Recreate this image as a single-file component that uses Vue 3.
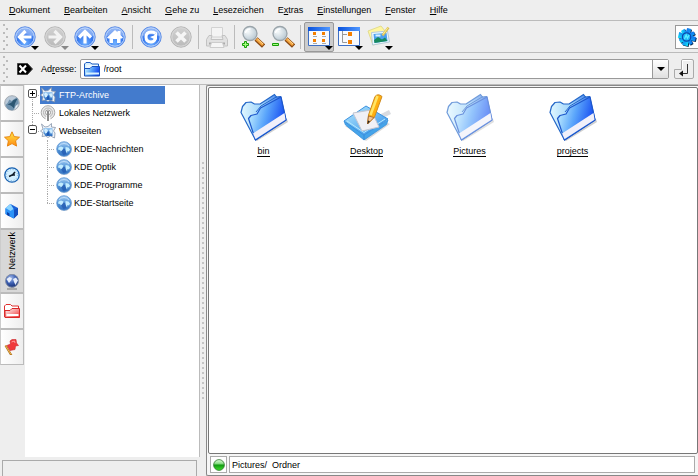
<script setup>
import { ref } from 'vue'

const menus = [
  ['', 'D', 'okument'],
  ['', 'B', 'earbeiten'],
  ['', 'A', 'nsicht'],
  ['', 'G', 'ehe zu'],
  ['', 'L', 'esezeichen'],
  ['E', 'x', 'tras'],
  ['', 'E', 'instellungen'],
  ['', 'F', 'enster'],
  ['', 'H', 'ilfe'],
]

const tools = [
  [
    { icon: 'back', label: 'Zurück', drop: true },
    { icon: 'forward', label: 'Vorwärts', drop: true, off: true },
    { icon: 'up', label: 'Nach oben', drop: true },
    { icon: 'home', label: 'Startseite' },
  ],
  [
    { icon: 'reload', label: 'Neu laden' },
    { icon: 'stop', label: 'Abbrechen', off: true },
  ],
  [{ icon: 'print', label: 'Drucken', off: true }],
  [
    { icon: 'zoomin', label: 'Vergrößern' },
    { icon: 'zoomout', label: 'Verkleinern' },
  ],
  [
    { icon: 'iconview', label: 'Symbolansicht', drop: true, on: true },
    { icon: 'treeview', label: 'Baumansicht', drop: true },
    { icon: 'preview', label: 'Vorschau', drop: true },
  ],
]

const tabs = [
  { icon: 'amarok', label: 'Medien' },
  { icon: 'star', label: 'Lesezeichen' },
  { icon: 'clock', label: 'Verlauf' },
  { icon: 'cube', label: 'Persönlicher Ordner' },
  { icon: 'network', label: 'Netzwerk', on: true },
  { icon: 'redfolder', label: 'Wurzelordner' },
  { icon: 'flag', label: 'Dienste' },
]

const tree = [
  { text: 'FTP-Archive', icon: 'site', box: '+', on: true },
  { text: 'Lokales Netzwerk', icon: 'lan' },
  { text: 'Webseiten', icon: 'site', box: '-', last: true },
  { text: 'KDE-Nachrichten', icon: 'globe', sub: true },
  { text: 'KDE Optik', icon: 'globe', sub: true },
  { text: 'KDE-Programme', icon: 'globe', sub: true },
  { text: 'KDE-Startseite', icon: 'globe', sub: true, last: true },
]

const files = [
  { name: 'bin', icon: 'folder' },
  { name: 'Desktop', icon: 'desktop' },
  { name: 'Pictures', icon: 'folder', hover: true },
  { name: 'projects', icon: 'folder' },
]

const address = ref('/root')
</script>

<template>
  <div class="window">
    <svg class="defs" width="0" height="0" aria-hidden="true">
      <defs>
        <radialGradient id="gBlue" cx=".5" cy=".8" r=".8">
          <stop offset="0" stop-color="#6fb0ff" /><stop offset=".5" stop-color="#3577ee" /><stop offset="1" stop-color="#6f9ff2" />
        </radialGradient>
        <linearGradient id="gGrey" x2="0" y2="1">
          <stop offset="0" stop-color="#d2d2d2" /><stop offset="1" stop-color="#b9b9b9" />
        </linearGradient>
        <linearGradient id="gFront" x1="0" y1=".3" x2="1" y2=".6">
          <stop offset="0" stop-color="#c4f0ff" /><stop offset=".45" stop-color="#5ba6fb" /><stop offset="1" stop-color="#0b3df0" />
        </linearGradient>
        <linearGradient id="gBack" x2="1" y2="0">
          <stop offset="0" stop-color="#e2f8ff" /><stop offset=".45" stop-color="#9fd4fb" /><stop offset="1" stop-color="#1f5fe6" />
        </linearGradient>
        <linearGradient id="gGlobe" x2="0" y2="1">
          <stop offset="0" stop-color="#a3cdf2" /><stop offset=".45" stop-color="#5c9bdb" /><stop offset="1" stop-color="#2e6fc0" />
        </linearGradient>
        <radialGradient id="gDark" cx=".4" cy=".3" r=".75">
          <stop offset="0" stop-color="#aac0ee" /><stop offset=".5" stop-color="#3f62b4" /><stop offset="1" stop-color="#132a70" />
        </radialGradient>
        <linearGradient id="gTitle" x2="1" y2="0">
          <stop offset="0" stop-color="#0a52dc" /><stop offset="1" stop-color="#4f97ff" />
        </linearGradient>
        <linearGradient id="gTray" x2="1" y2="1">
          <stop offset="0" stop-color="#b8ebff" /><stop offset="1" stop-color="#2b8be8" />
        </linearGradient>
        <radialGradient id="gLens" cx=".35" cy=".35" r=".7">
          <stop offset="0" stop-color="#f8fbfc" /><stop offset="1" stop-color="#b8c8d2" />
        </radialGradient>
        <linearGradient id="gLed" x2="0" y2="1">
          <stop offset="0" stop-color="#e3ffe0" /><stop offset=".4" stop-color="#7fd87a" /><stop offset=".5" stop-color="#119a10" /><stop offset="1" stop-color="#3fe02c" />
        </linearGradient>
        <linearGradient id="gRed" x2="1" y2="1">
          <stop offset="0" stop-color="#fff" /><stop offset="1" stop-color="#ef3030" />
        </linearGradient>
        <linearGradient id="gStar" x2="0" y2="1">
          <stop offset="0" stop-color="#ffe94a" /><stop offset="1" stop-color="#ff8a10" />
        </linearGradient>
        <linearGradient id="gGear" x2="1" y2="1">
          <stop offset="0" stop-color="#0d6ff0" /><stop offset=".5" stop-color="#1296f4" /><stop offset="1" stop-color="#12e4f8" />
        </linearGradient>
      </defs>

      <symbol id="disc" viewBox="0 0 24 24">
        <circle cx="12" cy="12" r="10.200" fill="url(#gBlue)" stroke="#5c8ce6" />
        <circle cx="12" cy="12" r="9.200" fill="none" stroke="#c0d8fb" />
        <path d="M3.500 11a8.500 8 0 0 1 17 0q-8-3-17 0z" fill="#fff" opacity=".3" />
      </symbol>
      <symbol id="discgrey" viewBox="0 0 24 24">
        <circle cx="12" cy="12" r="10.200" fill="url(#gGrey)" stroke="#b5b5b5" />
        <circle cx="12" cy="12" r="9.200" fill="none" stroke="#d9d9d9" />
      </symbol>
      <symbol id="back" viewBox="0 0 24 24"><use href="#disc" /><path d="M18.500 12H7M12.500 6L6.500 12l6 6" fill="none" stroke="#fff" stroke-width="3.200" /></symbol>
      <symbol id="forward" viewBox="0 0 24 24"><use href="#discgrey" /><path d="M5.500 12H17M11.500 6l6 6-6 6" fill="none" stroke="#f2f2f2" stroke-width="3.200" /></symbol>
      <symbol id="up" viewBox="0 0 24 24"><use href="#disc" /><path d="M12 18.500V7M6 12.500l6-6 6 6" fill="none" stroke="#fff" stroke-width="3.200" /></symbol>
      <symbol id="home" viewBox="0 0 24 24"><use href="#disc" /><path d="M4 12.500L12 5l2.500 2.300V6h3v4l2.500 2.500-1 1h-1.500V18H14v-4h-4v4H6.500v-4.500H5z" fill="#fff" /></symbol>
      <symbol id="reload" viewBox="0 0 24 24"><use href="#disc" /><path d="M16.500 8.200Q14.500 7 12 7q-5 .2-5 5t5 5q3.500 0 4.300-3.500" fill="none" stroke="#fff" stroke-width="3" /><path d="M18 6.500v8h-2l-5-2.500 4-1.500z" fill="#fff" /></symbol>
      <symbol id="stop" viewBox="0 0 24 24"><use href="#discgrey" /><path d="M7.500 7.500l9 9M16.500 7.500l-9 9" stroke="#f5f5f5" stroke-width="3.600" /></symbol>
      <symbol id="print" viewBox="0 0 24 24">
        <path d="M6.500 2.500h11V12h-11z" fill="#f4f4f4" stroke="#d2d2d2" />
        <path d="M4 10.500h3l-1 4h12l-1-4h3l2.500 4V21h-21v-6.500z" fill="#e1e1e1" stroke="#c2c2c2" />
        <path d="M4 17.500h16v2H4z" fill="#aaa" /><path d="M6.500 17.500h11l1.500 5H5z" fill="#f5f5f5" stroke="#ccc" />
      </symbol>
      <symbol id="lens" viewBox="0 0 24 24">
        <path d="M15 14l7.500 7" stroke="#8b4a12" stroke-width="4.500" /><path d="M15.500 14l6.500 6" stroke="#f4a33c" stroke-width="2.800" /><path d="M16.500 14l5.500 5" stroke="#ffdc9a" />
        <circle cx="9" cy="8.500" r="7" fill="url(#gLens)" stroke="#9aa4aa" stroke-width="1.300" /><path d="M4.500 8a5 5 0 0 1 5-4" fill="none" stroke="#fff" stroke-width="1.500" />
      </symbol>
      <symbol id="zoomin" viewBox="0 0 24 24"><use href="#lens" /><path d="M3.500 16.500h2v2h2v2h-2v2h-2v-2h-2v-2h2z" fill="#a6ff80" stroke="#189c08" /></symbol>
      <symbol id="zoomout" viewBox="0 0 24 24"><use href="#lens" /><path d="M1.500 18.500h6v2h-6z" fill="#a6ff80" stroke="#189c08" /></symbol>
      <symbol id="pane" viewBox="0 0 24 24"><path d="M1.500 2.500h21v18h-21z" fill="#f7faff" stroke="#3d6fc4" /><path d="M1 2h22v4H1z" fill="url(#gTitle)" /></symbol>
      <symbol id="iconview" viewBox="0 0 24 24">
        <use href="#pane" /><path d="M6 7h3v3H6zM15 7h3v3h-3zM6 14h3v3H6zM15 14h3v3h-3z" fill="#f47f00" />
        <path d="M6 11.500h4M15 11.500h4M6 18.500h4M15 18.500h4" stroke="#aaa" />
      </symbol>
      <symbol id="treeview" viewBox="0 0 24 24">
        <use href="#pane" /><path d="M5.500 6v11.500H10M5.500 9.500H10" fill="none" stroke="#999" /><path d="M11 7h4v4h-4zM11 15h4v4h-4z" fill="#f47f00" />
      </symbol>
      <symbol id="preview" viewBox="0 0 24 24">
        <path d="M1 6l13-5 4 5 4 10L6 20z" fill="#fff6a0" stroke="#e2dc8e" /><path d="M4.500 7.500l16-1.500 2 11-17 3z" fill="#e9f7ff" stroke="#b5cbd9" />
        <path d="M6.500 9l13-1 1 8-13 2z" fill="#4ba0ee" /><path d="M7 15l4-3 4 2.500 3-2 2.500 3.500-13 2z" fill="#16895e" /><path d="M8.500 10.500h5" stroke="#d7f0ff" stroke-width="2" />
        <path d="M21.500 2.500l-6 8" stroke="#d9be58" stroke-width="2.500" /><path d="M21 2.500l-5 7" stroke="#fff18c" />
      </symbol>

      <symbol id="folder" viewBox="0 0 48 48">
        <path d="M14 46l33-20 1 3-31 19z" fill="#777" opacity=".35" />
        <path d="M1 19.500l1.500-6 3.500-4 5-.5 3.500 2h5.500l14.500-9.500 2 2.500 4-.500L46 27 15.500 47z" fill="url(#gBack)" stroke="#2467c8" stroke-width="1.200" stroke-linejoin="round" />
        <path d="M16 19l5-6 16-9.500" fill="none" stroke="#2467c8" />
        <path d="M8.500 25.500l2.500-3 6-1.500 3.500-6L41 4l5 23-30.500 20z" fill="url(#gFront)" stroke="#1d57cc" stroke-width="1.200" stroke-linejoin="round" />
        <path d="M13 40.500l31.500-20.500 1 6.700-30 19.300z" fill="#f1f0fa" />
      </symbol>
      <symbol id="desktop" viewBox="0 0 48 48">
        <path d="M34 23l12-6 2 4-14 7z" fill="#d9dbe0" /><path d="M2 33l21 15 24-17-5-2z" fill="#888" opacity=".3" />
        <path d="M1 28l20 14v5L2.500 32zM21 42l24-15-1.500 4.500L21 47z" fill="#45a4ea" stroke="#3a92dc" stroke-width=".8" />
        <path d="M1 28l22-15 22 13-24 16z" fill="url(#gTray)" stroke="#3a92e0" />
        <path d="M4 28l17 11.500L42 26" fill="none" stroke="#b5ebff" />
        <path d="M10 20l18-3 8 17-17 4z" fill="#f0f0f6" stroke="#c2c6d2" />
        <path d="M24.500 31l1-9L32 3.500q3-3.500 7 0L31.500 24z" fill="#ffaf10" stroke="#d08c20" /><path d="M27.500 22L34.500 3" stroke="#ffe566" stroke-width="2.500" />
        <path d="M24.500 31l1-8 5.500 1.500z" fill="#f4c896" stroke="#a05e28" stroke-width=".8" /><path d="M24.500 31l.5-3.500 2 .8z" fill="#222" />
      </symbol>
      <symbol id="smallfolder" viewBox="0 0 16 16">
        <path d="M.5 14.500V3L2 1.500h4L8 3h6.500v4" fill="#d5efff" stroke="#1c5cc0" /><path d="M2.500 4h11v4h-11z" fill="#edf8ff" />
        <path d="M.5 15V7.500H6L8 5.500h7.500V15z" fill="url(#gFront)" stroke="#1750bd" /><path d="M2 12.500h13" stroke="#d8f2ff" stroke-width="2" />
      </symbol>

      <symbol id="globe" viewBox="0 0 16 16">
        <circle cx="8.500" cy="8.500" r="7.400" fill="#999" opacity=".4" /><circle cx="8" cy="8" r="7.300" fill="url(#gGlobe)" stroke="#5e97d4" stroke-width=".8" />
        <path d="M2.500 6.500l2.500-1 2.500 1-.5 2.500-2 1.500-1-1.500-2-.5zM9.500 6l3 .5 1.500 2-1 2-1.500-.5-.5 2.500-1.500-3z" fill="#c2ecff" />
        <path d="M5 10.500l2.500-3L9 8l1.500 5-3 1z" fill="#215ab0" opacity=".75" /><path d="M3 5Q5 2.500 8 2.500t5 2.500" fill="none" stroke="#d5eaff" opacity=".7" />
      </symbol>
      <symbol id="site" viewBox="0 0 16 16">
        <path d="M1.500 1l3.500 3 3-.5L11.500.5v3.500l4 .5-2 3.500 1.500 2-.5 5-4-2-2.500 1.500-2.500-1.500-3.500.5 1-3.500L.5 8l2.500-2z" fill="#eef3f9" stroke="#8795ab" stroke-width=".8" />
        <path d="M3.500 5h9v8h-7l-2-3z" fill="url(#gGlobe)" /><path d="M4 7l1.500-1.500L8 7l-1 3-2 .5zM9 7l2.500-1 1 3-1.500 2z" fill="#d3efff" /><path d="M6.500 10.500l2-2.500 1 4-2 1z" fill="#1c58b4" />
      </symbol>
      <symbol id="lan" viewBox="0 0 16 16">
        <circle cx="8" cy="7.500" r="6.800" fill="#e9e9e9" stroke="#aaa" /><circle cx="8" cy="7.500" r="4.500" fill="none" stroke="#b5b5b5" />
        <circle cx="8" cy="7.500" r="2.500" fill="#fff" stroke="#999" /><path d="M5 16l2-7h2l2 7z" fill="#fff" /><path d="M8 6v10" stroke="#666" stroke-width="1.500" />
      </symbol>

      <symbol id="amarok" viewBox="0 0 16 16">
        <circle cx="8" cy="8" r="7.300" fill="#b9c9d8" stroke="#a6acb3" /><path d="M1.500 10q2.500-2 4-5.500l2 1.500L12.500 2.500q2.500 2.500 2 6.500l-3 2-2 4q-5 1-7-3z" fill="#7193ae" />
        <path d="M3.500 9.500l4-2 2-2.500 4-1.500-2.500 5-1 5q-2.500-3.500-6.500-4z" fill="#2c5672" /><path d="M12 11l2-2-1 3-2 2z" fill="#eef3f8" />
      </symbol>
      <symbol id="star" viewBox="0 0 16 16"><path d="M8 .8l2.200 4.800 5.300.6-3.900 3.600 1 5.300L8 12.600l-4.600 2.500 1-5.300L.5 6.200l5.300-.6z" fill="url(#gStar)" stroke="#e58008" stroke-width=".9" stroke-linejoin="round" /></symbol>
      <symbol id="clock" viewBox="0 0 16 16">
        <circle cx="8" cy="8" r="7.200" fill="#d3efff" stroke="#1760b0" stroke-width="1.300" /><circle cx="8" cy="8" r="5.500" fill="none" stroke="#7db2e0" stroke-dasharray="1 1.880" />
        <path d="M5 9.500l3-1.500h3M8 8.500l3-3.500" stroke="#101c28" stroke-width="1.600" fill="none" />
      </symbol>
      <symbol id="cube" viewBox="0 0 16 16">
        <path d="M1.500 5.500l5-4.500L14 5v6.500L9.500 15.500l-8-4.500z" fill="#1a62d8" /><path d="M1.500 5.500l5-4.500 3.500 6v8.500L1.500 11z" fill="#2c93f8" /><path d="M1.500 5l5-4 3 5-3 2z" fill="#8bd4ff" />
        <path d="M3 9l2.500 1.500v3L3 12z" fill="#0a3fa6" /><path d="M10 7L14 5v6.500L10 15.500z" fill="#1450c0" />
      </symbol>
      <symbol id="network" viewBox="0 0 16 16">
        <path d="M3 15h10" stroke="#999" stroke-width="1.500" /><path d="M7 13h3v2H7z" fill="#aaa" /><circle cx="8" cy="6.800" r="6.500" fill="url(#gDark)" stroke="#8490a8" />
        <path d="M2.500 5l3-2 2.500 1.500-1 2-2 2.500zM9 5l3-1.500 2 3-1.500 2.500-1 2-1.500-3z" fill="#e6edfa" />
      </symbol>
      <symbol id="redfolder" viewBox="0 0 16 16">
        <path d="M.5 14V3L2 1.500h4.500L8 3h6.500v3" fill="#fff" stroke="#df3030" /><path d="M1 14.500V7.500h5l2-2h7.500v9z" fill="url(#gRed)" stroke="#d82828" /><path d="M2.500 12h12" stroke="#fff" stroke-width="2" />
      </symbol>
      <symbol id="flag" viewBox="0 0 16 16">
        <path d="M1.500 6.500l6 10" stroke="#a36a19" stroke-width="2" /><path d="M1.500 6.500l5.500 9" stroke="#f5b950" />
        <path d="M3 6.500L6.500 5 6 2l2-1.500h4L12.500 4l2 2.500-3 .5-.5 3.500-5 1z" fill="#f0393c" stroke="#c9282c" stroke-width=".6" /><path d="M7.500 3l3-1 .5 2" stroke="#ff9b9b" fill="none" />
      </symbol>
      <symbol id="teeth" viewBox="0 0 24 24">
        <g transform="rotate(14 12 12)">
          <path id="bar" d="M9.500 1.500h5l1 21h-7z" /><use href="#bar" transform="rotate(90 12 12)" />
          <path d="M10 2h4l.5 20h-5z" transform="rotate(45 12 12)" /><path d="M10 2h4l.5 20h-5z" transform="rotate(135 12 12)" />
        </g>
      </symbol>
    </svg>

    <nav class="menubar">
      <button v-for="m in menus" :key="m[1] + m[2]" type="button">{{ m[0] }}<u>{{ m[1] }}</u>{{ m[2] }}</button>
    </nav>

    <div class="toolbar">
      <span class="grip"></span>
      <div v-for="(group, i) in tools" :key="i" class="group">
        <button v-for="t in group" :key="t.icon" type="button" class="tool" :class="{ on: t.on }" :disabled="t.off" :aria-label="t.label">
          <svg class="i24"><use :href="'#' + t.icon" /></svg>
          <span v-if="t.drop" class="drop"></span>
        </button>
      </div>
      <div class="throbber">
        <svg class="i20" viewBox="0 0 24 24">
          <use href="#teeth" fill="#062a52" transform="translate(1 1)" /><use href="#teeth" fill="url(#gGear)" />
          <circle cx="11.500" cy="12" r="5" fill="#1fb4f6" stroke="#0b49ad" stroke-width="1.500" />
          <path d="M9 14.500l2-5 1.500 4 2-4" fill="none" stroke="#5cf0ff" stroke-width="1.500" />
        </svg>
      </div>
    </div>

    <div class="addressbar">
      <span class="grip"></span>
      <button type="button" class="clear" aria-label="Adresse löschen">
        <svg width="16" height="12" viewBox="0 0 16 12"><path d="M.5.500H10.500L15.500 6l-5 5.500H.5z" fill="#000" stroke="#444" /><path d="M2.500 2.500l6.500 7M9 2.500l-6.500 7" stroke="#fff" stroke-width="2" /></svg>
      </button>
      <label for="address">Ad<u>r</u>esse:</label>
      <div class="combo">
        <svg class="i16"><use href="#smallfolder" /></svg>
        <input id="address" v-model="address" type="text" />
        <button type="button" aria-label="Liste öffnen"><span class="arrow"></span></button>
      </div>
      <button type="button" class="go" aria-label="Öffnen">
        <svg width="20" height="20" viewBox="0 0 20 20">
          <path d="M.5 18V10.500H7.500V2Q7.500.5 9 .5h9q1.500 0 1.500 1.500v16q0 1.500-1.500 1.500H2Q.5 19.500.5 18z" fill="#eee" stroke="#aaa" />
          <path d="M8.500 10.500V1.500h9" fill="none" stroke="#fff" /><path d="M13.500 5v9.500H7" fill="none" stroke="#333" /><path d="M5 14.500l4-3v6z" fill="#111" />
        </svg>
      </button>
    </div>

    <main class="body">
      <section class="side">
        <div class="panel">
          <div class="tabs">
            <button v-for="t in tabs" :key="t.icon" type="button" :class="{ on: t.on }" :aria-label="t.label">
              <span v-if="t.on" class="vertical">{{ t.label }}</span>
              <svg class="i16"><use :href="'#' + t.icon" /></svg>
            </button>
          </div>
          <ul class="tree">
            <li v-for="n in tree" :key="n.text" :class="{ sub: n.sub, last: n.last, on: n.on }">
              <span class="branch"><span v-if="n.box" class="box" :class="{ plus: n.box === '+' }"></span></span>
              <span class="node"><svg class="i16"><use :href="'#' + n.icon" /></svg>{{ n.text }}</span>
            </li>
          </ul>
        </div>
        <div class="sidestatus"></div>
      </section>

      <div class="splitter"><span></span></div>

      <section class="view">
        <div class="files">
          <a v-for="f in files" :key="f.name" href="#" :class="{ hover: f.hover }">
            <svg class="i48"><use :href="'#' + f.icon" /></svg>
            <span>{{ f.name }}</span>
          </a>
        </div>
        <footer class="status">
          <div class="led"><svg width="12" height="12" viewBox="0 0 12 12"><circle cx="6" cy="6" r="5.400" fill="url(#gLed)" stroke="#31782f" stroke-width=".8" /></svg></div>
          <div class="message">Pictures/&nbsp; Ordner</div>
        </footer>
      </section>
    </main>
  </div>
</template>

<style>
body {
  margin: 0;
  background: #eee;
}
</style>

<style scoped>
.window {
  display: flex;
  flex-direction: column;
  min-height: 100vh;
  background: #eee;
  color: #000;
  font: 9px/12px "Liberation Sans", Arial, sans-serif;
  cursor: default;
}
.window * {
  box-sizing: border-box;
}
button,
input {
  margin: 0;
  padding: 0;
  border: 0;
  background: none;
  color: inherit;
  font: inherit;
}
svg {
  display: block;
  flex: none;
}
.defs {
  position: absolute;
}
.i16 {
  width: 16px;
  height: 16px;
}
.i20 {
  width: 20px;
  height: 20px;
}
.i24 {
  width: 24px;
  height: 24px;
}
.i48 {
  width: 48px;
  height: 48px;
}
u {
  text-underline-offset: 1px;
}

.menubar {
  display: flex;
  gap: 14px;
  height: 21px;
  padding: 0 9px;
  border-bottom: 1px solid #bbb;
}
.toolbar,
.addressbar {
  display: flex;
  align-items: center;
  height: 32px;
  border-bottom: 1px solid #bbb;
}
.grip {
  flex: none;
  width: 6px;
  height: 26px;
  margin: 0 1px 0 3px;
  background:
    conic-gradient(#c4c4c4 0 0) 0 0 / 0 0,
    repeating-linear-gradient(#bbb 0 2px, transparent 2px 8px) 0 0 / 2px 100% no-repeat,
    repeating-linear-gradient(transparent 0 4px, #bbb 4px 6px, transparent 6px 8px) 3px 0 / 2px 100% no-repeat;
}
.group {
  display: flex;
}
.group + .group::before {
  content: "";
  width: 1px;
  height: 24px;
  margin: 3px 3px 0 2px;
  background: #bbb;
}
.tool {
  position: relative;
  display: grid;
  place-items: center;
  width: 30px;
  height: 30px;
  border: 1px solid transparent;
  border-radius: 2px;
}
.tool.on {
  border-color: #999;
  background: #ccc;
}
.drop {
  position: absolute;
  right: 0;
  bottom: 1px;
  border: 4px solid transparent;
  border-top-color: #000;
  border-bottom: 0;
}
.tool:disabled .drop {
  border-top-color: #888;
}
.throbber {
  display: grid;
  place-items: center;
  overflow: hidden;
  width: 23px;
  height: 24px;
  margin-left: auto;
  border: 1px solid #999;
  border-right: 0;
  background: #fff;
}

.clear {
  margin: 0 8px 0 7px;
}
.combo {
  display: flex;
  flex: 1;
  align-items: center;
  gap: 4px;
  height: 20px;
  margin: 0 5px 0 3px;
  padding-left: 3px;
  border: 1px solid #999;
  border-radius: 2px;
  background: #fff;
}
.combo input {
  flex: 1;
  min-width: 0;
  height: 16px;
  outline: none;
}
.combo button {
  display: grid;
  place-items: center;
  width: 16px;
  height: 18px;
  border-left: 1px solid #999;
  background: linear-gradient(#fff, #e0e0e0);
}
.arrow {
  border: 4px solid transparent;
  border-top-color: #000;
  border-bottom: 0;
}
.go {
  margin-right: 4px;
}

.body {
  display: flex;
  flex: 1;
}
.side {
  display: flex;
  flex-direction: column;
  width: 200px;
}
.panel {
  display: flex;
  flex: 1;
}
.tabs {
  width: 25px;
}
.tabs button {
  display: flex;
  flex-direction: column;
  align-items: center;
  justify-content: center;
  gap: 5px;
  width: 24px;
  height: 36px;
  border: 1px solid #bbb;
  border-left-color: #ccc;
  background: linear-gradient(90deg, #fff, #eee);
}
.tabs .on {
  height: 64px;
  background: #d8d8d8;
}
.vertical {
  writing-mode: vertical-rl;
  transform: rotate(180deg);
}
.tree {
  flex: 1;
  margin: 0;
  padding: 1px 0 0;
  border-right: 1px solid #bbb;
  background: #fff;
  list-style: none;
}
.tree li {
  display: flex;
  height: 18px;
  padding-left: 3px;
}
.tree .sub {
  padding-left: 18px;
}
.branch {
  position: relative;
  width: 12px;
}
.sub .branch {
  width: 13px;
}
.branch::before,
.branch::after {
  content: "";
  position: absolute;
  left: 4px;
  top: 0;
  height: 18px;
  border-left: 1px dotted #aaa;
}
.branch::after {
  top: 9px;
  width: 7px;
  height: 0;
  border-left: 0;
  border-top: 1px dotted #aaa;
}
.last .branch::before {
  height: 9px;
}
.tree li:first-child .branch::before {
  top: 9px;
  height: 9px;
}
.box {
  position: absolute;
  z-index: 1;
  left: 0;
  top: 3px;
  width: 9px;
  height: 9px;
  border: 1px solid #555;
  border-radius: 2px;
  background: linear-gradient(#000, #000) center / 5px 1px no-repeat #fff;
}
.box.plus {
  background:
    linear-gradient(#000, #000) center / 5px 1px no-repeat,
    linear-gradient(#000, #000) center / 1px 5px no-repeat,
    #fff;
}
.node {
  display: flex;
  align-items: center;
  gap: 3px;
  width: 125px;
}
.sub .node {
  gap: 2px;
}
.on .node {
  background: #437bcd;
  color: #fff;
}
.sidestatus {
  height: 16px;
  margin: 3px 3px 0 2px;
  border: 1px solid #aaa;
  border-bottom: 0;
}
.splitter {
  display: flex;
  align-items: center;
  width: 6px;
  padding: 0 2px;
}
.splitter span {
  width: 2px;
  height: 238px;
  background: repeating-linear-gradient(#c4c4c4 0 2px, transparent 2px 5px);
}

.view {
  display: flex;
  flex: 1;
  flex-direction: column;
  border: 1px solid #888;
  border-right: 0;
  border-radius: 2px 0 0 2px;
  background: #f6f6f6;
}
.files {
  display: flex;
  flex: 1;
  flex-wrap: wrap;
  align-content: flex-start;
  margin: 1px 0 0 1px;
  padding: 5px 3px;
  border: 1px solid #777;
  border-radius: 2px;
  background: #fff;
}
.files a {
  display: flex;
  flex-direction: column;
  align-items: center;
  gap: 5px;
  width: 103px;
  color: #000;
  text-decoration: none;
}
.files span {
  border-bottom: 1px solid #000;
  line-height: 10px;
}
.hover svg {
  opacity: .65;
}
.status {
  display: flex;
  gap: 2px;
  padding: 2px 3px;
}
.led,
.message {
  display: flex;
  align-items: center;
  height: 17px;
  border: 1px solid #aaa;
  background: #fff;
}
.led {
  justify-content: center;
  width: 17px;
}
.message {
  flex: 1;
  padding-left: 2px;
}
</style>
